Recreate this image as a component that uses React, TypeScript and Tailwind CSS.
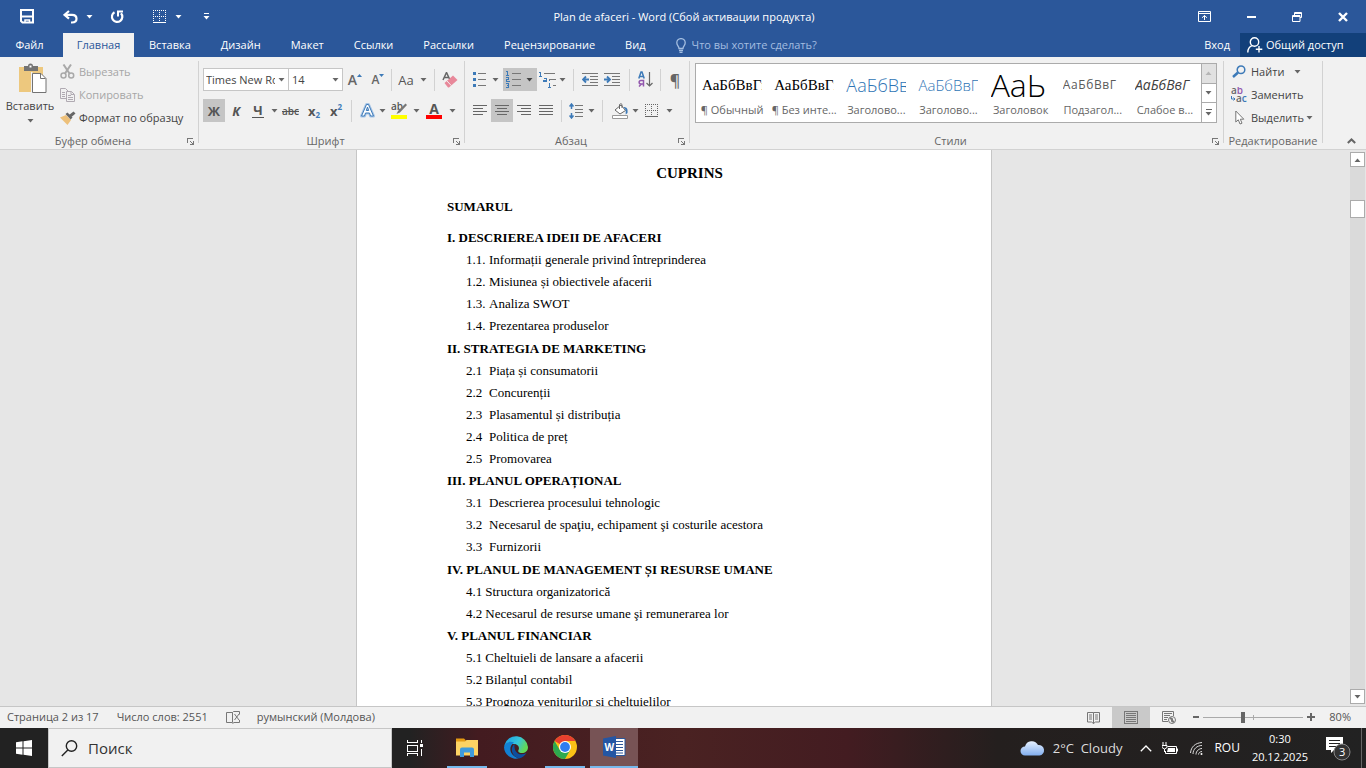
import type { ReactNode } from 'react';

const Caret = ({ className = 'text-[#666]' }: { className?: string }) => (
  <svg width="7" height="4" viewBox="0 0 7 4" className={`shrink-0 ${className}`} fill="currentColor" aria-hidden="true">
    <path d="M0.500 0h6L3.500 3.500z" />
  </svg>
);

const CaretButton = ({ label }: { label: string }) => (
  <button aria-label={label} className="flex h-[22px] w-2 items-center justify-center">
    <Caret />
  </button>
);

interface ToolProps {
  label: string;
  children: ReactNode;
  active?: boolean;
  width?: string;
}

const Tool = ({ label, children, active = false, width = 'w-[22px]' }: ToolProps) => (
  <button
    aria-label={label}
    aria-pressed={active}
    className={`flex h-[23px] shrink-0 items-center justify-center ${width} ${active ? 'bg-[#c5c5c5]' : ''}`}
  >
    {children}
  </button>
);

const Divider = ({ className }: { className: string }) => (
  <span className={`flex h-[22px] shrink-0 justify-center ${className}`}>
    <span className="w-px bg-[#d2d2d2]" />
  </span>
);

const Launcher = ({ label }: { label: string }) => (
  <button aria-label={label} className="mr-[3px] p-px text-[#777]">
    <svg width="7" height="7" viewBox="0 0 7 7" fill="none" stroke="currentColor" shapeRendering="crispEdges">
      <path d="M0.500 5V0.500H6" />
      <path d="M6.500 3v3.500H3M3 3l3 3" />
    </svg>
  </button>
);

interface GroupProps {
  title: string;
  className: string;
  launcher?: boolean;
  children: ReactNode;
}

const Group = ({ title, className, launcher = true, children }: GroupProps) => (
  <section aria-label={title} className={`flex flex-col ${className}`}>
    <div className="flex min-h-0 flex-1">
      <div className="min-w-0 flex-1">{children}</div>
      <span className="-mb-3 mt-1 w-px bg-[#d2d2d2]" />
    </div>
    <div className="flex h-[18px] items-center pt-[2px] pr-px">
      <span className="flex-1 text-center whitespace-nowrap text-[#666]">{title}</span>
      {launcher && <Launcher label={`${title}: параметры`} />}
    </div>
  </section>
);

/* Four text lines, each given as [start, end] on a 14px grid. */
const AlignIcon = ({ rows }: { rows: [number, number][] }) => (
  <svg width="14" height="11" viewBox="0 0 14 11" stroke="#666" shapeRendering="crispEdges">
    {rows.map(([from, to], i) => (
      <path key={i} d={`M${from} ${i * 3 + 0.5}H${to}`} />
    ))}
  </svg>
);

const SaveIcon = () => (
  <svg width="15" height="15" viewBox="0 0 15 15" fill="none" stroke="#fff" strokeWidth="2">
    <path d="M1 1h12v12.500H2.500L1 12z" />
    <path d="M2 7.500h10" />
    <path d="M5 14v-3h4.500v3" strokeWidth="1.500" />
  </svg>
);

const UndoIcon = () => (
  <svg width="15" height="14" viewBox="0 0 15 14" fill="none" stroke="#fff" strokeWidth="2.200">
    <path d="M6 1L1.500 4.800 6 8.600" />
    <path d="M2 4.800h7c3 0 4.500 1.600 4.500 4S12 12.500 9 12.500H8" />
  </svg>
);

const RepeatIcon = () => (
  <svg width="15" height="14" viewBox="0 0 15 14" fill="none" stroke="#fff" strokeWidth="2.200">
    <path d="M4.500 2.200A5.200 5.200 0 1 0 11 3.200" />
    <path d="M8 6.500V1.500h5" strokeWidth="2" />
  </svg>
);

const BordersIcon = ({ color }: { color: string }) => (
  <svg width="14" height="14" viewBox="0 0 14 14" stroke={color} fill="none" shapeRendering="crispEdges">
    <path d="M0 0.500h13M0 6.500h13M0.500 0v12M6.500 0v12M12.500 0v12" strokeDasharray="1 1" />
    <path d="M0 12.500h13" />
  </svg>
);

const PasteIcon = () => (
  <svg width="29" height="31" viewBox="0 0 29 31">
    <path d="M1 4h24v25H1z" fill="#edc87e" />
    <path d="M6 8V3h4a2.500 2.500 0 0 1 5 0h5v5z" fill="#737373" />
    <path d="M11.500 2.500h2v2h-2z" fill="#fff" />
    <path d="M13 9h1.500v21H13z" fill="#f1f1f1" />
    <path d="M14.500 10.500h8.500l5 5V29.500H14.500V10.500z" fill="#fff" stroke="#737373" />
    <path d="M22.500 10.500v5h5" fill="none" stroke="#737373" />
  </svg>
);

const CutIcon = () => (
  <svg width="15" height="15" viewBox="0 0 15 15" fill="none" stroke="#a9a9a9" strokeWidth="1.500">
    <path d="M3.500 0.500l6 9M11 0.500l-6 9" strokeWidth="2" />
    <circle cx="3.500" cy="11.500" r="2.500" />
    <circle cx="11.200" cy="11.500" r="2.500" />
  </svg>
);

const CopyIcon = () => (
  <svg width="15" height="14" viewBox="0 0 15 14" fill="#f1f1f1" stroke="#b0aab2">
    <path d="M0.500 0.500h5l2.500 2.500v7.500H0.500z" />
    <path d="M2 4.500h3M2 6.500h3M2 8.500h3" />
    <path d="M6.500 3.500h5l3 3v7h-8z" />
    <path d="M11 3.500v3h3M8 7.500h3M8 9.500h5M8 11.500h5" fill="none" />
  </svg>
);

const BrushIcon = () => (
  <svg width="16" height="14" viewBox="0 0 16 14">
    <path d="M0 6.500L6 4l5 5-3.500 5z" fill="#edc07a" />
    <path d="M5.500 3l2-1.500 5 5-1.800 2z" fill="#666" />
    <path d="M9 4L13.500 0.500 15.500 2.500 11.500 6z" fill="#666" />
  </svg>
);

const EraserIcon = () => (
  <svg width="17" height="16" viewBox="0 0 17 16">
    <path d="M1 8L4.500 0.500 8 8M2.300 5.500h4" fill="none" stroke="#666" strokeWidth="1.500" />
    <path d="M2.500 11L11 3.500l4.500 4.500L7 15.500H6z" fill="#e8889a" />
    <path d="M4.800 8.800l4.600 4.900" stroke="#f1f1f1" />
  </svg>
);

const BulletsIcon = () => (
  <svg width="14" height="15" viewBox="0 0 14 15" stroke="#777" shapeRendering="crispEdges">
    <path d="M5 1.500h8M5 7.500h8M5 13.500h8" />
    <path d="M0 1.500h3M0 7.500h3M0 13.500h3" stroke="#3d7ab8" strokeWidth="3" />
  </svg>
);

const NumberedIcon = () => (
  <svg width="15" height="17" viewBox="0 0 15 17" fill="none" shapeRendering="crispEdges">
    <path d="M6 2.500h9M6 8.500h9M6 14.500h9" stroke="#777" />
    <path
      d="M0 0.500h1.500V4M0 4.500h3M0 6.500h2.500v2h-2v2h3M0 12.500h2.500v4H0M1 14.500h1.500"
      stroke="#3d7ab8"
    />
  </svg>
);

const MultilevelIcon = () => (
  <svg width="17" height="16" viewBox="0 0 17 16" fill="none" shapeRendering="crispEdges">
    <path d="M5 1.500h11M10 7.500h7M14 13.500h3" stroke="#777" />
    <path d="M0 0.500h1.500V4M0 4.500h3M5 6.500h2.500V9.500H4.500v-1.500h3M10.500 8v1M9.500 11.500h1V15.500M9 15.500h3" stroke="#3d7ab8" />
  </svg>
);

const IndentIcon = ({ outdent = false }: { outdent?: boolean }) => (
  <svg width="17" height="13" viewBox="0 0 17 13" fill="none">
    <path d="M0 0.500h16M8 3.500h8M8 6.500h8M8 9.500h8M0 12.500h16" stroke="#777" shapeRendering="crispEdges" />
    <path d={outdent ? 'M7 6.500H1M4 3.500l-3 3 3 3' : 'M0 6.500h6M3 3.500l3 3-3 3'} stroke="#3d7ab8" strokeWidth="1.800" />
  </svg>
);

const SortIcon = () => (
  <svg width="15" height="17" viewBox="0 0 15 17" fill="none">
    <path d="M0.800 7.500L3 1h1l2.200 6.500M1.500 5.500h4" stroke="#3d7ab8" strokeWidth="1.500" />
    <path d="M5.500 15.500v-6H3c-2.500 0-2.500 3.500 0 3.500h2M3.500 13L1 15.500" stroke="#9257ad" strokeWidth="1.500" />
    <path d="M11.500 1v14M8.500 12l3 3 3-3" stroke="#666" strokeWidth="1.200" />
  </svg>
);

const SpacingIcon = () => (
  <svg width="15" height="16" viewBox="0 0 15 16" fill="none">
    <path d="M6 2.500h8M6 6.500h8M6 9.500h8M6 13.500h8" stroke="#777" shapeRendering="crispEdges" />
    <path d="M2.500 1v5M0.500 3.500l2-2.500 2 2.500M2.500 10v5M0.500 12.500l2 2.500 2-2.500" stroke="#3d7ab8" strokeWidth="1.500" />
  </svg>
);

const FillIcon = () => (
  <svg width="17" height="16" viewBox="0 0 17 16" fill="none">
    <path d="M3 7l6-5 4.500 5.500L8 11z" fill="#fff" stroke="#666" />
    <path d="M7.500 6V1.500a1.500 1.500 0 0 1 2.500 0V5" stroke="#666" />
    <path d="M11.500 4c3.500 0 4.500 2 4 6l-1.800 1.500V7z" fill="#3d7ab8" />
    <path d="M0.500 12.500h15v3h-15z" fill="#fff" stroke="#999" />
  </svg>
);

const HighlightIcon = () => (
  <svg width="17" height="17" viewBox="0 0 17 17">
    <text x="0" y="8" fontSize="10" fontWeight="600" fill="#555" fontFamily="Open Sans">ab</text>
    <path d="M14.500 1.500l1.500 1.500-7 7.500-3.500 1.500L7 9z" fill="#777" />
    <path d="M0 13h16v4H0z" fill="#ff0" />
  </svg>
);

const FindIcon = () => (
  <svg width="14" height="13" viewBox="0 0 14 13" fill="none" stroke="#3d7ab8">
    <circle cx="9" cy="4.800" r="3.800" strokeWidth="1.500" />
    <path d="M6 7.500L1 12" strokeWidth="2.500" />
  </svg>
);

const ReplaceIcon = () => (
  <svg width="17" height="16" viewBox="0 0 17 16" fontFamily="Open Sans" fontSize="10" fontWeight="600">
    <text x="0" y="7" fill="#666">a<tspan fill="#9257ad">b</tspan></text>
    <text x="5" y="15" fill="#666">a<tspan fill="#3d7ab8">c</tspan></text>
    <path d="M0.500 9v3h3M2.500 10.500L4 12l-1.500 1.500" fill="none" stroke="#3d7ab8" />
  </svg>
);

const PointerIcon = () => (
  <svg width="10" height="15" viewBox="0 0 10 15" fill="#fff" stroke="#777">
    <path d="M0.800 1v11l2.500-2.200 1.700 4.200 2-0.800-1.700-4H8.800z" />
  </svg>
);

const tabs = ['Вставка', 'Дизайн', 'Макет', 'Ссылки', 'Рассылки', 'Рецензирование', 'Вид'];

const TitleBar = () => (
  <header className="flex h-[33px] items-center text-white">
    <div className="flex flex-1 items-center pl-5">
      <button aria-label="Сохранить"><SaveIcon /></button>
      <button aria-label="Отменить" className="ml-7"><UndoIcon /></button>
      <button aria-label="История отмены" className="ml-2"><Caret className="text-white" /></button>
      <button aria-label="Повторить" className="ml-[17px]"><RepeatIcon /></button>
      <button aria-label="Границы" className="ml-7"><BordersIcon color="#fff" /></button>
      <button aria-label="Варианты границ" className="ml-2"><Caret className="text-white" /></button>
      <button aria-label="Настройка панели" className="ml-[21px]">
        <svg width="7" height="7" viewBox="0 0 7 7" fill="#fff"><path d="M1 0h5v1H1zM0.500 3h6L3.500 6.500z" /></svg>
      </button>
    </div>
    <h1 className="whitespace-nowrap">Plan de afaceri - Word (Сбой активации продукта)</h1>
    <div className="flex flex-1 items-center justify-end gap-9 pr-[18px]">
      <button aria-label="Параметры ленты">
        <svg width="13" height="11" viewBox="0 0 13 11" fill="none" stroke="#fff">
          <path d="M0.500 0.500h12v10H0.500zM0.500 2.500h12M6.500 9V4.500M4 6.800l2.500-2.300L9 6.800" />
        </svg>
      </button>
      <button aria-label="Свернуть">
        <svg width="9" height="3" viewBox="0 0 9 3" fill="#fff"><path d="M0 1h9v2H0z" /></svg>
      </button>
      <button aria-label="Восстановить">
        <svg width="10" height="10" viewBox="0 0 10 10" fill="none" stroke="#fff">
          <path d="M2.500 3V0.500h7v5H8M0.500 3.500H8v6H0.500zM0.500 4.500H8M2.500 1.500h7" />
        </svg>
      </button>
      <button aria-label="Закрыть">
        <svg width="10" height="10" viewBox="0 0 10 10" stroke="#fff" strokeWidth="2.400"><path d="M1 1l8 8M9 1L1 9" /></svg>
      </button>
    </div>
  </header>
);

const TabBar = () => (
  <nav className="flex h-6 items-center whitespace-nowrap text-white">
    <button className="w-[63px] pr-1">Файл</button>
    <button className="h-6 w-[71px] bg-[#f1f1f1] text-[#2b579a]">Главная</button>
    <div className="flex gap-[30px] pl-[15px]">
      {tabs.map((tab) => (
        <button key={tab}>{tab}</button>
      ))}
    </div>
    <label className="ml-[30px] flex items-center gap-[6px] text-[#a3bde0]">
      <svg width="10" height="15" viewBox="0 0 10 15" fill="none" stroke="currentColor" strokeWidth="1.300">
        <path d="M3 10.500c0-2.500-2.200-3-2.200-5.700a4.200 4.200 0 0 1 8.400 0c0 2.700-2.200 3.200-2.200 5.700zM3 12.500h4M3.500 14.300h3" />
      </svg>
      <input
        aria-label="Что вы хотите сделать?"
        placeholder="Что вы хотите сделать?"
        className="w-[150px] bg-transparent outline-none placeholder:text-[#a3bde0]"
      />
    </label>
    <button className="mr-[10px] ml-auto">Вход</button>
    <button className="flex h-6 w-[126px] items-center gap-[3px] bg-[#12407a] pl-[7px]">
      <svg width="16" height="16" viewBox="0 0 16 16" fill="none" stroke="#fff" strokeWidth="1.400">
        <circle cx="7.500" cy="5" r="4.200" />
        <path d="M0.800 15.500c0-3.500 2-6 4.500-6.800M12 9v6.500M8.800 12.300h6.500" />
      </svg>
      Общий доступ
    </button>
  </nav>
);

const ClipboardGroup = () => (
  <Group title="Буфер обмена" className="w-[199px] shrink-0">
    <div className="flex pt-[3px]">
      <button className="flex w-[60px] flex-col items-center pt-[3px]">
        <span className="pl-1"><PasteIcon /></span>
        <span className="mt-1 leading-4">Вставить</span>
        <span className="mt-[5px]"><Caret /></span>
      </button>
      <div className="flex flex-col whitespace-nowrap">
        <button disabled className="flex h-[23px] items-center gap-1 text-[#a6a6a6]">
          <CutIcon />Вырезать
        </button>
        <button disabled className="flex h-[23px] items-center gap-1 text-[#a6a6a6]">
          <CopyIcon />Копировать
        </button>
        <button className="flex h-[23px] items-center gap-[3px]">
          <BrushIcon />Формат по образцу
        </button>
      </div>
    </div>
  </Group>
);

const FontGroup = () => (
  <Group title="Шрифт" className="w-[266px] shrink-0">
    <div className="flex flex-col gap-2 pt-[11px] pl-1">
      <div className="flex items-center">
        <div className="flex h-[23px] w-[86px] items-center border border-[#c6c6c6] bg-white pr-[3px]">
          <select aria-label="Шрифт" className="min-w-0 flex-1 appearance-none overflow-hidden pl-[2px]">
            <option>Times New Roman</option>
          </select>
          <Caret className="ml-[3px] text-[#666]" />
        </div>
        <div className="-ml-px flex h-[23px] w-[55px] items-center border border-[#c6c6c6] bg-white pr-[3px]">
          <select aria-label="Размер шрифта" className="min-w-0 flex-1 appearance-none pl-[3px]">
            <option>14</option>
          </select>
          <Caret />
        </div>
        <Tool label="Увеличить размер" width="w-6">
          <span className="text-sm font-semibold text-[#666]">A</span>
          <svg width="5" height="12" viewBox="0 0 5 12" fill="#3d7ab8"><path d="M0 3L2.500 0 5 3z" /></svg>
        </Tool>
        <Tool label="Уменьшить размер">
          <span className="text-xs font-semibold text-[#666]">A</span>
          <svg width="5" height="12" viewBox="0 0 5 12" fill="#3d7ab8"><path d="M0 0h5L2.500 3z" /></svg>
        </Tool>
        <Divider className="w-1" />
        <Tool label="Регистр" width="w-[26px]"><span className="text-[13px] text-[#555]">Aa</span></Tool>
        <CaretButton label="Варианты регистра" />
        <Divider className="w-[14px]" />
        <Tool label="Очистить форматирование" width="w-[18px]"><EraserIcon /></Tool>
      </div>
      <div className="flex items-center text-[#555]">
        <Tool label="Полужирный" active><b className="text-[13px]">Ж</b></Tool>
        <Tool label="Курсив"><b className="text-[13px] italic">К</b></Tool>
        <Tool label="Подчеркнутый"><b className="border-b border-[#555] px-px text-[13px] leading-[14px]">Ч</b></Tool>
        <span className="w-px" />
        <CaretButton label="Варианты подчеркивания" />
        <Tool label="Зачеркнутый" width="w-[25px]"><span className="text-[10px] font-semibold line-through">abc</span></Tool>
        <Tool label="Подстрочный"><b className="text-[13px]">x</b><span className="mt-2 text-[8px] font-bold text-[#3d7ab8]">2</span></Tool>
        <Tool label="Надстрочный"><b className="text-[13px]">x</b><span className="mb-2 text-[8px] font-bold text-[#3d7ab8]">2</span></Tool>
        <Divider className="w-[9px]" />
        <Tool label="Текстовые эффекты">
          <svg width="15" height="15" viewBox="0 0 15 15" fill="none" strokeLinejoin="round">
            <path d="M1.500 13L6.500 1.500h2l5 11.500h-3l-1-3h-4l-1 3zM6.300 7.500h2.400L7.500 4z" fill="#fff" stroke="#a9c6e6" strokeWidth="3" />
            <path d="M1.500 13L6.500 1.500h2l5 11.500h-3l-1-3h-4l-1 3zM6.300 7.500h2.400L7.500 4z" fill="#fff" stroke="#3d7ab8" />
          </svg>
        </Tool>
        <CaretButton label="Варианты эффектов" />
        <Tool label="Выделение цветом" width="w-[26px]"><HighlightIcon /></Tool>
        <CaretButton label="Цвет выделения" />
        <Tool label="Цвет текста" width="w-7">
          <span className="w-4 border-b-4 border-[#f00] text-sm leading-[13px] font-bold">A</span>
        </Tool>
        <CaretButton label="Палитра текста" />
      </div>
    </div>
  </Group>
);

const ParagraphGroup = () => (
  <Group title="Абзац" className="w-[225px] shrink-0">
    <div className="flex flex-col gap-2 pt-[11px] pl-1">
      <div className="flex items-center">
        <Tool label="Маркеры"><BulletsIcon /></Tool>
        <CaretButton label="Варианты маркеров" />
        <button aria-label="Нумерация" aria-pressed="true" className="ml-1 flex h-[23px] w-[34px] items-center gap-[5px] bg-[#c5c5c5] pl-[3px]">
          <NumberedIcon /><Caret className="text-[#444]" />
        </button>
        <Tool label="Многоуровневый список" width="w-[21px]"><MultilevelIcon /></Tool>
        <CaretButton label="Варианты списка" />
        <Divider className="w-[14px]" />
        <Tool label="Уменьшить отступ" width="w-5"><IndentIcon outdent /></Tool>
        <Tool label="Увеличить отступ" width="w-6"><IndentIcon /></Tool>
        <Divider className="w-[10px]" />
        <Tool label="Сортировка" width="w-[22px]"><SortIcon /></Tool>
        <Divider className="w-2" />
        <Tool label="Непечатаемые знаки"><span className="text-base font-semibold text-[#666]">¶</span></Tool>
      </div>
      <div className="flex items-center">
        <Tool label="По левому краю"><AlignIcon rows={[[0, 14], [0, 10], [0, 14], [0, 10]]} /></Tool>
        <Tool label="По центру" active><AlignIcon rows={[[0, 14], [2, 12], [0, 14], [2, 12]]} /></Tool>
        <Tool label="По правому краю"><AlignIcon rows={[[0, 14], [4, 14], [0, 14], [4, 14]]} /></Tool>
        <Tool label="По ширине"><AlignIcon rows={[[0, 14], [0, 14], [0, 14], [0, 14]]} /></Tool>
        <Divider className="w-2" />
        <Tool label="Интервал"><SpacingIcon /></Tool>
        <CaretButton label="Варианты интервала" />
        <Divider className="w-[14px]" />
        <Tool label="Заливка"><FillIcon /></Tool>
        <CaretButton label="Цвет заливки" />
        <Tool label="Границы" width="w-[26px]"><BordersIcon color="#666" /></Tool>
        <CaretButton label="Варианты границ" />
      </div>
    </div>
  </Group>
);

const styles = [
  { name: '¶ Обычный', sample: 'АаБбВвГг', look: 'font-["Liberation_Serif",serif] text-[15px] text-black' },
  { name: '¶ Без инте...', sample: 'АаБбВвГг', look: 'font-["Liberation_Serif",serif] text-[15px] text-black' },
  { name: 'Заголово...', sample: 'АаБбВв', look: 'text-lg font-light text-[#2e74b5]' },
  { name: 'Заголово...', sample: 'АаБбВвГ', look: 'text-[15px] font-light text-[#2e74b5]' },
  { name: 'Заголовок', sample: 'АаЬ', look: 'text-[32px] font-light text-black' },
  { name: 'Подзагол...', sample: 'АаБбВвГ', look: 'text-xs tracking-wider text-[#5a5a5a]' },
  { name: 'Слабое в...', sample: 'АаБбВвГ', look: 'text-sm italic text-[#404040]' },
];

const StylesGroup = () => (
  <Group title="Стили" className="min-w-0 flex-1">
    <div className="mt-[6px] mr-[6px] ml-[5px] flex h-[60px] border border-[#ababab] bg-white">
      {styles.map((style, i) => (
        <button key={i} className="flex min-w-0 flex-1 flex-col items-center overflow-hidden">
          <span className={`flex h-[38px] w-[60px] items-center overflow-hidden pt-1 leading-none whitespace-nowrap ${style.look}`}>
            {style.sample}
          </span>
          <span className="leading-4 whitespace-nowrap text-[#666]">{style.name}</span>
        </button>
      ))}
      <div className="-my-px -mr-px flex w-4 flex-col border border-[#ababab]">
        <button aria-label="Вверх" className="flex flex-1 items-center justify-center bg-[#e1e1e1]">
          <Caret className="rotate-180 text-[#b5b5b5]" />
        </button>
        <button aria-label="Вниз" className="flex flex-1 items-center justify-center border-y border-[#ababab]"><Caret /></button>
        <button aria-label="Все стили" className="flex flex-1 flex-col items-center justify-center gap-[2px]">
          <span className="h-px w-[6px] bg-[#666]" /><Caret />
        </button>
      </div>
    </div>
  </Group>
);

const EditingGroup = () => (
  <Group title="Редактирование" launcher={false} className="w-[99px] shrink-0">
    <div className="flex flex-col pt-[3px] pl-[7px] whitespace-nowrap">
      <button className="flex h-[23px] items-center"><span className="w-5 pl-px"><FindIcon /></span>Найти<Caret className="ml-[10px] text-[#666]" /></button>
      <button className="flex h-[23px] items-center"><span className="w-5"><ReplaceIcon /></span>Заменить</button>
      <button className="flex h-[23px] items-center"><span className="w-5 pl-1"><PointerIcon /></span>Выделить<Caret className="ml-[2px] text-[#666]" /></button>
    </div>
  </Group>
);

const Ribbon = () => (
  <div className="flex h-[93px] border-b border-[#d2d2d2] bg-[#f1f1f1] text-[#444]">
    <ClipboardGroup />
    <FontGroup />
    <ParagraphGroup />
    <StylesGroup />
    <EditingGroup />
    <div className="flex w-[43px] shrink-0 items-end justify-end pr-[10px] pb-[5px]">
      <button aria-label="Свернуть ленту">
        <svg width="9" height="6" viewBox="0 0 9 6" fill="none" stroke="#666" strokeWidth="2"><path d="M0.800 5l3.700-3.500L8.200 5" /></svg>
      </button>
    </div>
  </div>
);

interface Chapter {
  title: string;
  items: [string, string][];
  /** Number and title are parted by a plain space, not a tab stop. */
  inline?: boolean;
  className?: string;
}

const chapters: Chapter[] = [
  {
    title: 'I. DESCRIEREA IDEII DE AFACERI',
    items: [
      ['1.1.', 'Informații generale privind întreprinderea'],
      ['1.2.', 'Misiunea și obiectivele afacerii'],
      ['1.3.', 'Analiza SWOT'],
      ['1.4.', 'Prezentarea produselor'],
    ],
  },
  {
    title: 'II. STRATEGIA DE MARKETING',
    className: 'mt-px',
    items: [
      ['2.1', 'Piața și consumatorii'],
      ['2.2', 'Concurenții'],
      ['2.3', 'Plasamentul și distribuția'],
      ['2.4', 'Politica de preț'],
      ['2.5', 'Promovarea'],
    ],
  },
  {
    title: 'III. PLANUL OPERAȚIONAL',
    items: [
      ['3.1', 'Descrierea procesului tehnologic'],
      ['3.2', 'Necesarul de spaţiu, echipament şi costurile acestora'],
      ['3.3', 'Furnizorii'],
    ],
  },
  {
    title: 'IV. PLANUL DE MANAGEMENT ȘI RESURSE UMANE',
    className: 'mt-px',
    inline: true,
    items: [
      ['4.1', 'Structura organizatorică'],
      ['4.2', 'Necesarul de resurse umane şi remunerarea lor'],
    ],
  },
  {
    title: 'V. PLANUL FINANCIAR',
    inline: true,
    items: [
      ['5.1', 'Cheltuieli de lansare a afacerii'],
      ['5.2', 'Bilanțul contabil'],
      ['5.3', 'Prognoza veniturilor și cheltuielilor'],
    ],
  },
];

const DocumentPage = () => (
  <article className='h-full w-[636px] overflow-hidden border-x border-[#c6c6c6] bg-white pr-[59px] pl-[90px] font-["Liberation_Serif",serif] text-[13px] leading-[22px] whitespace-nowrap text-black'>
    <h2 className="pt-3 text-center text-[15px] font-bold">CUPRINS</h2>
    <h3 className="pt-3 font-bold">SUMARUL</h3>
    <div className="pt-[9px]">
      {chapters.map((chapter) => (
        <section key={chapter.title} className={chapter.className}>
          <h3 className="font-bold">{chapter.title}</h3>
          {chapter.items.map(([number, text]) => (
            <p key={number} className={`flex pl-[19px] ${chapter.inline ? 'gap-[3px]' : ''}`}>
              <span className={chapter.inline ? '' : 'w-[23px]'}>{number}</span>
              <span>{text}</span>
            </p>
          ))}
        </section>
      ))}
    </div>
  </article>
);

const Workspace = () => (
  <main className="flex min-h-0 flex-1 bg-[#e6e6e6]">
    <div className="flex min-w-0 flex-1 justify-center overflow-hidden"><DocumentPage /></div>
    <div className="flex w-[18px] py-[2px] pr-px pl-[2px]">
      <div className="flex flex-1 flex-col bg-[#dadada]">
        <button aria-label="Прокрутить вверх" className="flex h-[15px] items-center justify-center border border-[#ababab] bg-white">
          <Caret className="rotate-180 text-[#666]" />
        </button>
        <div className="mt-[33px] h-[18px] border border-[#ababab] bg-white" />
        <button aria-label="Прокрутить вниз" className="mt-auto flex h-[15px] items-center justify-center border border-[#ababab] bg-white">
          <Caret />
        </button>
      </div>
    </div>
  </main>
);

const StatusBar = () => (
  <footer className="flex h-[22px] items-center border-t border-[#c6c6c6] bg-[#f1f1f1] pb-px pl-[7px] whitespace-nowrap text-[#555]">
    <span>Страница 2 из 17</span>
    <span className="ml-[18px]">Число слов: 2551</span>
    <button aria-label="Правописание" className="ml-[18px]">
      <svg width="14" height="13" viewBox="0 0 14 13" fill="none" stroke="#777">
        <path d="M6.500 1.500v10H0.500v-10h6l1-1h6v3M13.500 9v2.500H8l-1.500 1M8.500 3l4.500 6M13 3L8.500 9" />
      </svg>
    </button>
    <span className="ml-[17px]">румынский (Молдова)</span>
    <div className="ml-auto flex h-[21px] items-center">
      <button aria-label="Режим чтения" className="flex w-[38px] justify-center">
        <svg width="13" height="13" viewBox="0 0 13 13" fill="none" stroke="#777">
          <path d="M6.500 1.500v11M6.500 1.500H0.500v9.500h4l2 1.500 2-1.500h4V1.500zM2 4h3M2 6h3M2 8h3M8 4h3M8 6h3M8 8h3" />
        </svg>
      </button>
      <button aria-label="Разметка страницы" aria-pressed="true" className="flex h-full w-[38px] items-center justify-center bg-[#c9c9c9]">
        <svg width="14" height="13" viewBox="0 0 14 13" fill="none" stroke="#777" shapeRendering="crispEdges">
          <path d="M0.500 0.500h13v12H0.500zM2 2.500h10M2 4.500h10M2 6.500h10M2 8.500h10M2 10.500h10" />
        </svg>
      </button>
      <button aria-label="Веб-документ" className="flex w-[38px] justify-center">
        <svg width="14" height="13" viewBox="0 0 14 13" fill="none" stroke="#777">
          <path d="M6 10.500H0.500v-10h11V5M2 2.500h8M2 4.500h6M2 6.500h4M2 8.500h3" />
          <circle cx="10" cy="9" r="3.500" /><path d="M8 7l2 1v2l2 1" strokeWidth="2" />
        </svg>
      </button>
      <button aria-label="Уменьшить масштаб" className="ml-[5px] h-[2px] w-[6px] bg-[#666]" />
      <input
        type="range"
        aria-label="Масштаб"
        min={10}
        max={190}
        defaultValue={81}
        className="mx-1 h-3 w-[100px] appearance-none bg-[linear-gradient(#aaa,#aaa),linear-gradient(#aaa,#aaa)] bg-[length:100%_1px,1px_5px] bg-center bg-no-repeat [&::-webkit-slider-thumb]:h-[11px] [&::-webkit-slider-thumb]:w-1 [&::-webkit-slider-thumb]:appearance-none [&::-webkit-slider-thumb]:bg-[#666]"
      />
      <button aria-label="Увеличить масштаб">
        <svg width="8" height="8" viewBox="0 0 8 8" stroke="#666" strokeWidth="2"><path d="M0 4h8M4 0v8" /></svg>
      </button>
      <span className="w-[51px] pr-[15px] text-right">80%</span>
    </div>
  </footer>
);

const FolderIcon = () => (
  <svg width="22" height="19" viewBox="0 0 22 19">
    <path d="M0 0.500h8l2 2v4H0z" fill="#e59b13" />
    <path d="M0 3.500h9l1.500-1.500H22v15.500H0z" fill="#fdd364" />
    <path d="M4 19v-7.500q0-2 2-2h10q2 0 2 2V19h-4v-4.500H8V19z" fill="#3f9bdc" />
  </svg>
);

const EdgeIcon = () => (
  <svg width="24" height="24" viewBox="0 0 24 24">
    <defs>
      <linearGradient id="edge-top" x1="0" x2="1" y2="0.400">
        <stop offset="0" stopColor="#1b9de2" /><stop offset="0.600" stopColor="#35c4dc" /><stop offset="1" stopColor="#62d957" />
      </linearGradient>
    </defs>
    <path d="M0.500 10A12 12 0 0 1 24 12c0 4-3 6-6 6-2.500 0-4.500-1-3.500-3C16 12 13.500 9 10 9 5 9 0 13 0.500 10z" fill="url(#edge-top)" />
    <path d="M0 12C1 7 6 6 10 7.500c-3 2-4 5-3.500 8 .7 4 4.500 7 8.500 7.800A12 12 0 0 1 0 12z" fill="#1280d3" />
    <path d="M10.500 9C6 12 7 21 15 23.600c3-.6 6-3 7.500-5.500-7 3.500-13-.5-12-9.100z" fill="#0c4f9e" />
  </svg>
);

const ChromeIcon = () => (
  <svg width="24" height="24" viewBox="0 0 24 24">
    <circle cx="12" cy="12" r="12" fill="#fbc116" />
    <path d="M12 12L1.600 6A12 12 0 0 1 22.400 6H12z" fill="#e8402f" />
    <path d="M1.600 6A12 12 0 0 0 12 24l5.200-9H12L6.800 15z" fill="#2da94f" />
    <circle cx="12" cy="12" r="6" fill="#fff" />
    <circle cx="12" cy="12" r="4.900" fill="#2e7cf0" />
  </svg>
);

const WordIcon = () => (
  <svg width="23" height="22" viewBox="0 0 23 22">
    <path d="M11 2.500h11v17H11z" fill="#fff" stroke="#2b579a" />
    <path d="M13 5.500h7M13 8.500h7M13 11.500h7M13 14.500h7M13 17h7" stroke="#2b579a" />
    <path d="M0 2.500L13 0v22L0 19.500z" fill="#2456a4" />
    <text x="1.500" y="15" fontSize="10" fontWeight="700" fill="#fff" fontFamily="Open Sans">W</text>
  </svg>
);

const apps = [
  { name: 'Проводник', icon: <FolderIcon />, look: 'w-10 border-[#76b9ed]' },
  { name: 'Microsoft Edge', icon: <EdgeIcon />, look: 'w-10 border-transparent' },
  { name: 'Google Chrome', icon: <ChromeIcon />, look: 'w-10 border-[#76b9ed]' },
];

const Taskbar = () => (
  <nav
    aria-label="Панель задач"
    className="flex h-10 items-stretch bg-[linear-gradient(90deg,#222_0%,#222_30%,#431b20_35%,#4a2222_50%,#431c21_62%,#241f1e_73%,#222_100%)] text-white"
  >
    <button aria-label="Пуск" className="flex w-12 items-center justify-center">
      <svg width="16" height="16" viewBox="0 0 16 16" fill="#fff"><path d="M0 2.200L6.500 1.300V7.500H0zM7.500 1.200L16 0v7.500H7.500zM0 8.500h6.500v6.200L0 13.800zM7.500 8.500H16V16l-8.500-1.200z" /></svg>
    </button>
    <label className="flex w-[344px] items-center gap-[10px] border border-[#c6c6c6] bg-[#f1f1f1] pl-3">
      <svg width="17" height="17" viewBox="0 0 17 17" fill="none" stroke="#222" strokeWidth="1.400">
        <circle cx="10.500" cy="6" r="5.200" /><path d="M6.800 10L0.800 16" />
      </svg>
      <input aria-label="Поиск" placeholder="Поиск" className="min-w-0 flex-1 bg-transparent text-[15px] outline-none placeholder:text-[#333]" />
    </label>
    <button aria-label="Представление задач" className="flex w-[47px] items-center justify-center">
      <svg width="17" height="16" viewBox="0 0 17 16" fill="none" stroke="#fff" shapeRendering="crispEdges">
        <path d="M0.500 0v2.500h10V0M0.500 5.500h10v6h-10zM0.500 16v-2.500h10V16M14.500 0v3M14.500 9v7" /><path d="M13 5.500h3" strokeWidth="3" />
      </svg>
    </button>
    <div className="ml-2 flex gap-[9px]">
      {apps.map((app) => (
        <button key={app.name} aria-label={app.name} className={`flex items-center justify-center border-b-2 ${app.look}`}>{app.icon}</button>
      ))}
      <button aria-label="Word" className="-ml-1 flex w-12 items-center justify-center border-b-2 border-[#76b9ed] bg-[#775355]"><WordIcon /></button>
    </div>
    <div className="ml-auto flex items-center whitespace-nowrap">
      <button className="flex items-center gap-2 text-[13px] text-[#ddd]">
        <svg width="25" height="16" viewBox="0 0 25 16">
          <defs><linearGradient id="cloud" y2="1" x2="0"><stop stopColor="#e6f1ff" /><stop offset="1" stopColor="#82aeee" /></linearGradient></defs>
          <path d="M5 15.500a4.500 4.500 0 0 1 0-9 7 7 0 0 1 13-1.500 5.300 5.300 0 0 1 1.500 10.500z" fill="url(#cloud)" />
        </svg>
        <span className="whitespace-pre">2°C  Cloudy</span>
      </button>
      <button aria-label="Скрытые значки" className="ml-[18px]">
        <svg width="12" height="7" viewBox="0 0 12 7" fill="none" stroke="#fff" strokeWidth="1.300"><path d="M0.800 6.300L6 1l5.200 5.300" /></svg>
      </button>
      <svg className="ml-[10px]" width="17" height="13" viewBox="0 0 17 13" fill="none" stroke="#fff">
        <path d="M5.500 4.500h9v7h-11V9M15.500 6.500v3" /><path d="M6 6h7v4H5z" fill="#fff" stroke="none" /><path d="M1 0v3M4 0v3M0 3.500h5v2L2.500 7 0 5.500zM2.500 7v3" />
      </svg>
      <svg className="ml-[11px]" width="13" height="13" viewBox="0 0 13 13" fill="none" stroke="#ddd">
        <path d="M0.500 11C1 5 5 1 12 0.500M3 12c0-5 4-8.500 9-8.500M6 12.500c0-3.500 3-6 6-6M8.500 12.500c0-1.500 1.500-3 3.500-3" /><circle cx="11.500" cy="12" r="1" fill="#fff" stroke="none" />
      </svg>
      <button className="ml-[11px] text-xs">ROU</button>
      <div className="ml-3 text-center leading-[18px]"><div>0:30</div><div>20.12.2025</div></div>
      <button aria-label="Уведомления: 3" className="mr-[10px] ml-[18px] flex">
        <svg width="25" height="26" viewBox="0 0 25 26">
          <path d="M0 2h17v13H8l-3 3v-3H0z" fill="#fff" /><path d="M3 5.500h11M3 8.500h11M3 11.500h7" stroke="#222" />
          <circle cx="16" cy="17" r="8" fill="#333" stroke="#888" /><text x="13" y="21" fontSize="11" fill="#fff" fontFamily="Open Sans">3</text>
        </svg>
      </button>
      <span className="mr-1 h-10 w-px bg-[#666]" />
    </div>
  </nav>
);

export default function App() {
  return (
    <div className='flex h-screen flex-col overflow-hidden bg-[#2b579a] font-["Open_Sans","Noto_Sans",sans-serif] text-[11px] leading-4'>
      <TitleBar />
      <TabBar />
      <Ribbon />
      <Workspace />
      <StatusBar />
      <Taskbar />
    </div>
  );
}
